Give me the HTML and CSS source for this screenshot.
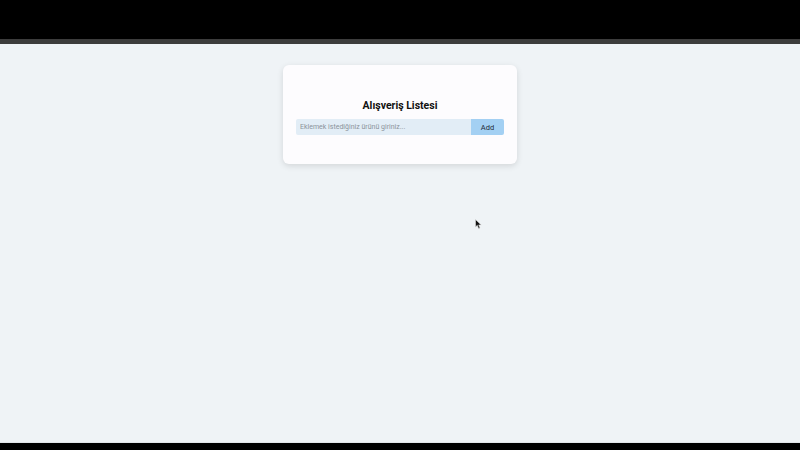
FILE: index.html
```html
<!DOCTYPE html>
<html lang="tr">
<head>
<meta charset="utf-8">
<title>Alışveriş Listesi</title>
<link rel="stylesheet" href="styles.css">
</head>
<body>
<div class="screen">
  <div class="topbar"></div>
  <div class="topstrip"></div>
  <main class="page">
    <section class="card">
      <h1 class="title">Alışveriş Listesi</h1>
      <form class="add-form">
        <input class="item-input" type="text" placeholder="Eklemek istediğiniz ürünü giriniz...">
        <button class="add-btn" type="button">Add</button>
      </form>
    </section>
  </main>
  <div class="bottombar"></div>
  <svg class="cursor" width="8" height="11" viewBox="0 0 8 11"><path d="M0.5 0.5 L0.5 8 L2.3 6.3 L3.6 9.6 L5 9 L3.7 5.9 L6.2 5.9 Z" fill="#111" stroke="#ddd" stroke-width="0.6"/></svg>
</div>
</body>
</html>
```
FILE: styles.css
```css
html, body {
  margin: 0;
  padding: 0;
  height: 100%;
}
body {
  font-family: Roboto, "Liberation Sans", Arial, sans-serif;
  background: #000;
}
.screen {
  position: relative;
  height: 450px;
  display: flex;
  flex-direction: column;
}
.topbar {
  height: 39px;
  background: #000;
}
.topstrip {
  height: 5px;
  background: #3c3c3c;
}
.page {
  flex: 1;
  background: #eff3f6;
  display: flex;
  flex-direction: column;
  align-items: center;
  border-bottom: 1px solid #e2e6ea;
}
.card {
  box-sizing: border-box;
  width: 234px;
  margin-top: 21px;
  padding: 34px 13px 29px;
  background: #fdfcfe;
  border-radius: 6px;
  box-shadow: 0 2px 6px rgba(0, 0, 0, 0.12);
}
.title {
  margin: 0 0 6px;
  font-size: 10.5px;
  line-height: 14px;
  font-weight: 700;
  text-align: center;
  color: #111;
}
.add-form {
  display: flex;
  height: 16px;
  margin: 0;
}
.item-input {
  flex: 1;
  min-width: 0;
  box-sizing: border-box;
  height: 16px;
  border: none;
  padding: 0 4px;
  background: #e2edf6;
  border-radius: 2px 0 0 2px;
  font-family: inherit;
  font-size: 7px;
  color: #333;
  outline: none;
}
.item-input::placeholder {
  color: #8b939b;
}
.add-btn {
  width: 33px;
  height: 16px;
  border: none;
  padding: 0;
  background: #a3d0f3;
  border-radius: 0 2px 2px 0;
  font-family: inherit;
  font-size: 7.5px;
  color: #1d2a36;
}
.bottombar {
  height: 7px;
  background: #000;
}
.cursor {
  position: absolute;
  left: 475px;
  top: 219px;
}
```
